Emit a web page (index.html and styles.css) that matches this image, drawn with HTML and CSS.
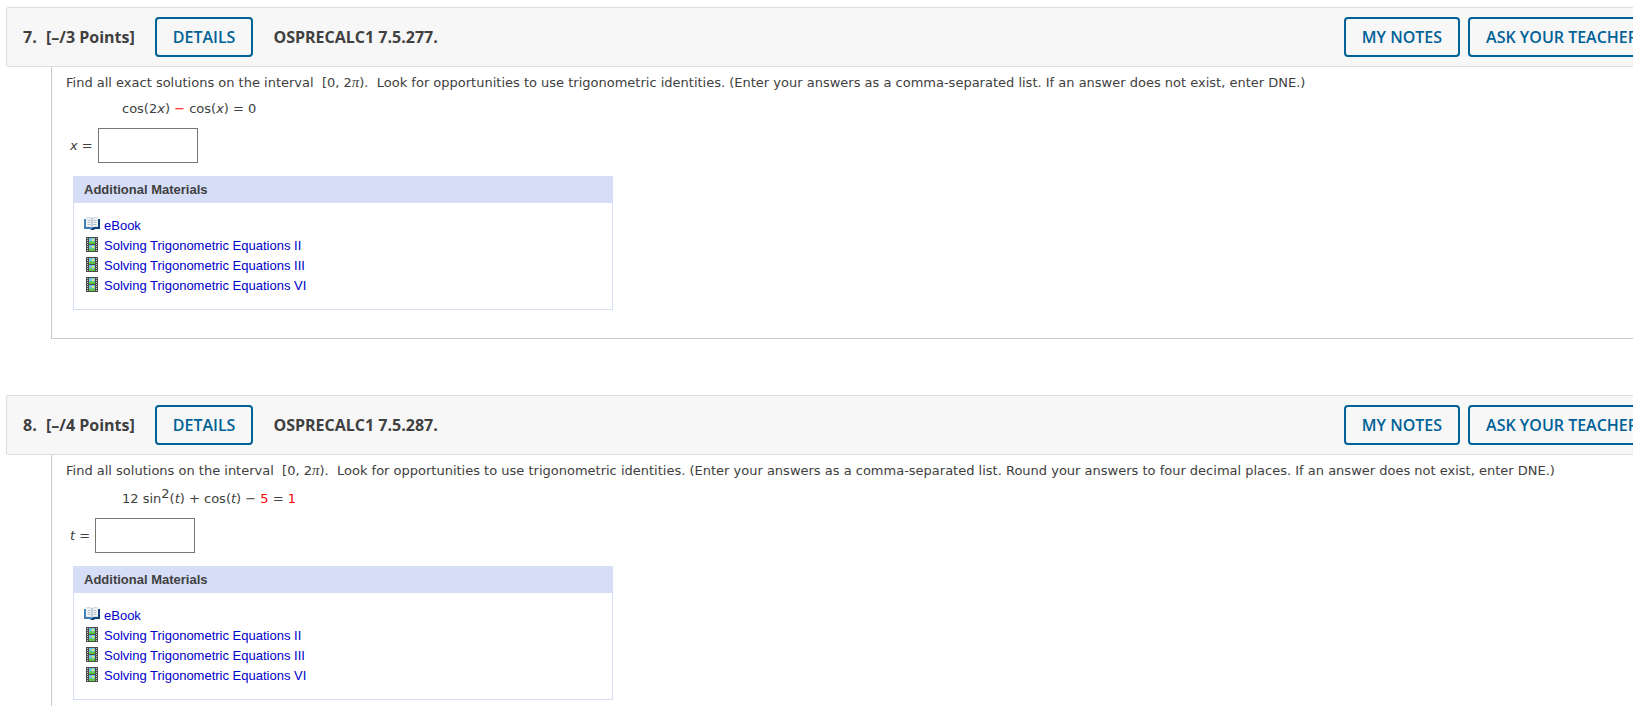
FILE: index.html
```html
<!DOCTYPE html>
<html lang="en">
<head>
  <meta charset="UTF-8">
  <meta name="viewport" content="width=device-width, initial-scale=1.0">
  <title>Assignment</title>
  <link rel="stylesheet" href="styles.css">
</head>
<body>
  <svg class="sprite" aria-hidden="true">
    <symbol id="icon-book" viewBox="0 0 16 15">
      <path d="M0 2h8v11H7l-1-1H0z" fill="#3f7fb8"/>
      <path d="M8 2h8v10h-5l-1 1H7v-1h1z" fill="#0f4378"/>
      <path d="M2 1q3-1 6 .5Q11 0 14 1v9q-3-.6-6 .6Q5 9.400 2 10z" fill="#f5f7f9"/>
      <path d="M2 1q3-1 6 .5Q11 0 14 1" fill="none" stroke="#9fb3c6" stroke-width=".6"/>
      <path d="M8 1.500v9" stroke="#8fa3b5" stroke-width="1"/>
      <path d="M3.500 3.500h3M3.500 5.500h3M3.500 7.500h3M9.500 3.500h3M9.500 5.500h3M9.500 7.500h3" stroke="#b4b9be" stroke-width="1"/>
    </symbol>
    <symbol id="icon-film" viewBox="0 0 12 15">
      <path d="M0 0h3v15H0zM9 0h3v15H9z" fill="#4a4a4a"/>
      <path d="M3 0h6v1H3zM3 7h6v1H3zM3 14h6v1H3z" fill="#4a4a4a"/>
      <path d="M3 1h6v6H3zM3 8h6v6H3z" fill="#6cc8f2"/>
      <path d="M3 5l2-1 2 1 2-1v3H3zM3 12l2-1 2 1 2-1v3H3z" fill="#5ec644"/>
      <path d="M6 2h2v2H6zM6 9h2v2H6z" fill="#f0e668"/>
      <path d="M1.500 1v14M10.500 1v14" stroke="#c9c9c9" stroke-width="1" stroke-dasharray="1 1"/>
    </symbol>
  </svg>

  <main class="assignment">
    <section class="question">
      <header class="question-header">
        <span class="number">7.</span>
        <span class="points">[–/3 Points]</span>
        <button type="button" class="btn btn-details">DETAILS</button>
        <h2 class="code">OSPRECALC1 7.5.277.</h2>
        <div class="actions">
          <button type="button" class="btn">MY NOTES</button>
          <button type="button" class="btn">ASK YOUR TEACHER</button>
        </div>
      </header>
      <div class="question-body">
        <p class="prompt">Find all exact solutions on the interval &nbsp;[0, 2<span class="pi">π</span>). &nbsp;Look for opportunities to use trigonometric identities. (Enter your answers as a comma-separated list. If an answer does not exist, enter DNE.)</p>
        <p class="equation">cos(2<i>x</i>) <span class="red">−</span> cos(<i>x</i>) = 0</p>
        <div class="answer">
          <label for="answer7"><i>x</i> =</label>
          <input type="text" id="answer7">
        </div>
        <div class="materials">
          <h3>Additional Materials</h3>
          <ul>
            <li><svg class="icon"><use href="#icon-book"/></svg><a href="#">eBook</a></li>
            <li><svg class="icon"><use href="#icon-film"/></svg><a href="#">Solving Trigonometric Equations II</a></li>
            <li><svg class="icon"><use href="#icon-film"/></svg><a href="#">Solving Trigonometric Equations III</a></li>
            <li><svg class="icon"><use href="#icon-film"/></svg><a href="#">Solving Trigonometric Equations VI</a></li>
          </ul>
        </div>
      </div>
    </section>

    <section class="question">
      <header class="question-header">
        <span class="number">8.</span>
        <span class="points">[–/4 Points]</span>
        <button type="button" class="btn btn-details">DETAILS</button>
        <h2 class="code">OSPRECALC1 7.5.287.</h2>
        <div class="actions">
          <button type="button" class="btn">MY NOTES</button>
          <button type="button" class="btn">ASK YOUR TEACHER</button>
        </div>
      </header>
      <div class="question-body">
        <p class="prompt">Find all solutions on the interval &nbsp;[0, 2<span class="pi">π</span>). &nbsp;Look for opportunities to use trigonometric identities. (Enter your answers as a comma-separated list. Round your answers to four decimal places. If an answer does not exist, enter DNE.)</p>
        <p class="equation">12 sin<sup>2</sup>(<i>t</i>) + cos(<i>t</i>) − <span class="red">5</span> = <span class="red">1</span></p>
        <div class="answer">
          <label for="answer8"><i>t</i> =</label>
          <input type="text" id="answer8">
        </div>
        <div class="materials">
          <h3>Additional Materials</h3>
          <ul>
            <li><svg class="icon"><use href="#icon-book"/></svg><a href="#">eBook</a></li>
            <li><svg class="icon"><use href="#icon-film"/></svg><a href="#">Solving Trigonometric Equations II</a></li>
            <li><svg class="icon"><use href="#icon-film"/></svg><a href="#">Solving Trigonometric Equations III</a></li>
            <li><svg class="icon"><use href="#icon-film"/></svg><a href="#">Solving Trigonometric Equations VI</a></li>
          </ul>
        </div>
      </div>
    </section>
  </main>
</body>
</html>
```
FILE: styles.css
```css
* {
  box-sizing: border-box;
}

html {
  overflow: hidden;
}

body {
  margin: 0;
  background-color: #fff;
  color: #404040;
  font-family: Verdana, "DejaVu Sans", sans-serif;
  font-size: 13px;
}

.sprite {
  display: none;
}

/* the question bar runs on past the right edge of the window */
.assignment {
  padding: 7px 0 0 6px;
  margin-right: -32px;
}

.question {
  margin-bottom: 56px;
}

.question-header {
  display: flex;
  align-items: center;
  height: 60px;
  padding: 0 8px 0 16px;
  background-color: #f7f7f7;
  border: 1px solid #dedede;
  border-radius: 2px;
  font-family: "Open Sans", sans-serif;
  font-size: 16px;
  font-weight: 700;
}

.number {
  width: 23px;
}

.code {
  margin: 0;
  font-size: 16px;
  font-weight: 700;
}

.btn {
  height: 40px;
  padding: 0 16px;
  background-color: #f7f7f7;
  border: 2px solid #006298;
  border-radius: 4px;
  color: #006298;
  font-family: "Open Sans", sans-serif;
  font-size: 16px;
  font-weight: 600;
  white-space: nowrap;
  cursor: pointer;
}

.btn-details {
  margin: 0 20px;
}

.actions {
  display: flex;
  gap: 8px;
  margin-left: auto;
}

.question-body {
  margin-left: 45px;
  padding: 6px 14px 28px;
  border-left: 1px solid #c8c8c8;
  border-bottom: 1px solid #c8c8c8;
}

.prompt,
.equation {
  margin: 0;
  line-height: 20px;
  white-space: nowrap;
}

.pi {
  font-family: "Liberation Serif", serif;
  font-style: italic;
  font-size: 15px;
  line-height: 1;
}

.equation {
  margin: 6px 0 9px 56px;
}

.equation sup {
  font-size: 13px;
  line-height: 14px;
}

.red {
  color: #f00;
}

.answer {
  display: flex;
  align-items: center;
  gap: 5px;
  margin-left: 4px;
}

.answer input {
  width: 100px;
  height: 35px;
  padding: 4px;
  border: 1px solid #767676;
  font-size: 13px;
}

.materials {
  width: 540px;
  margin: 13px 0 0 7px;
  border: 1px solid #d6ddf7;
  font-family: Arial, "Liberation Sans", sans-serif;
}

.materials h3 {
  margin: 0;
  padding: 0 10px;
  background-color: #d6ddf7;
  font-size: 13px;
  line-height: 26px;
}

.materials ul {
  margin: 0;
  padding: 12px 10px 14px;
  list-style: none;
}

.materials li {
  display: flex;
  align-items: center;
  gap: 4px;
  height: 20px;
}

.materials a {
  color: #0000cc;
  text-decoration: none;
}

.icon {
  width: 16px;
  height: 15px;
  margin-bottom: 2px;
}
```
